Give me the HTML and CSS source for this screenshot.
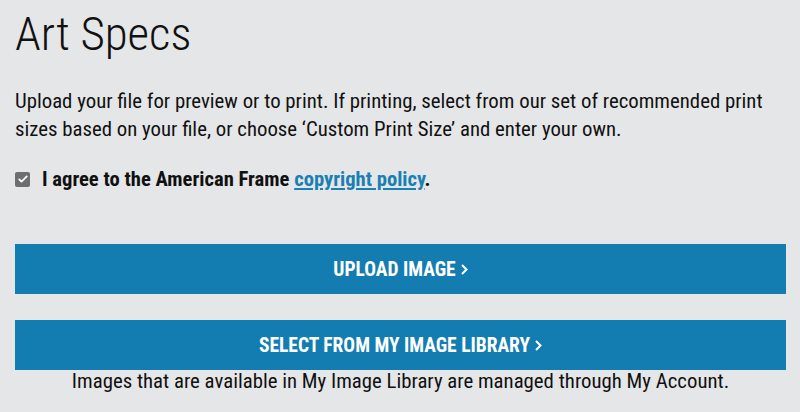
FILE: index.html
```html
<!DOCTYPE html>
<html lang="en">
<head>
<meta charset="utf-8">
<title>Art Specs</title>
<link rel="stylesheet" href="styles.css">
</head>
<body>
<main class="page">
  <h1 class="title">Art Specs</h1>
  <p class="intro">Upload your file for preview or to print. If printing, select from our set of recommended print sizes based on your file, or choose ‘Custom Print Size’ and enter your own.</p>
  <label class="agree">
    <span class="check"><svg viewBox="0 0 16 16" width="12" height="12"><path d="M3 8.5l3 3 7-7" fill="none" stroke="#fff" stroke-width="2.4" stroke-linecap="round" stroke-linejoin="round"/></svg></span>
    <span>I agree to the American Frame <a href="#" class="link">copyright policy</a>.</span>
  </label>
  <div class="actions">
    <button class="btn" type="button">UPLOAD IMAGE <svg class="chev" viewBox="0 0 7 11" width="7" height="11"><path d="M1 1l4.5 4.5L1 10" fill="none" stroke="#fff" stroke-width="2"/></svg></button>
    <button class="btn" type="button">SELECT FROM MY IMAGE LIBRARY <svg class="chev" viewBox="0 0 7 11" width="7" height="11"><path d="M1 1l4.5 4.5L1 10" fill="none" stroke="#fff" stroke-width="2"/></svg></button>
    <p class="note">Images that are available in My Image Library are managed through My Account.</p>
  </div>
</main>
</body>
</html>
```
FILE: styles.css
```css
html, body {
  margin: 0;
  padding: 0;
  background: #e5e6e8;
}
body {
  font-family: "Roboto Condensed", "Liberation Sans Narrow", "DejaVu Sans Condensed", Roboto, sans-serif;
  color: #111;
}
.page {
  padding: 5px 14px 0 15px;
}
.title {
  margin: 0;
  font-size: 47px;
  font-weight: 300;
  line-height: 58px;
  color: #111;
}
.intro {
  margin: 24px 0 0;
  font-size: 20.8px;
  line-height: 28px;
}
.agree {
  display: flex;
  align-items: center;
  gap: 12px;
  margin-top: 24px;
  font-size: 20.6px;
  font-weight: 700;
}
.check {
  width: 15px;
  height: 15px;
  flex: none;
  border-radius: 2px;
  background: #6d6e70;
  display: flex;
  align-items: center;
  justify-content: center;
}
.link {
  color: #1a7fb3;
  text-decoration: underline;
}
.actions {
  margin-top: 53px;
  display: flex;
  flex-direction: column;
}
.btn {
  height: 50px;
  border: 0;
  background: #137cb0;
  color: #fff;
  font-family: inherit;
  font-size: 19.5px;
  font-weight: 700;
  display: flex;
  align-items: center;
  justify-content: center;
  gap: 5px;
  cursor: pointer;
}
.btn + .btn {
  margin-top: 26px;
}
.chev {
  display: block;
  margin-top: 1px;
}
.note {
  margin: -2px 0 0;
  text-align: center;
  font-size: 20.8px;
  line-height: 26px;
}
```
